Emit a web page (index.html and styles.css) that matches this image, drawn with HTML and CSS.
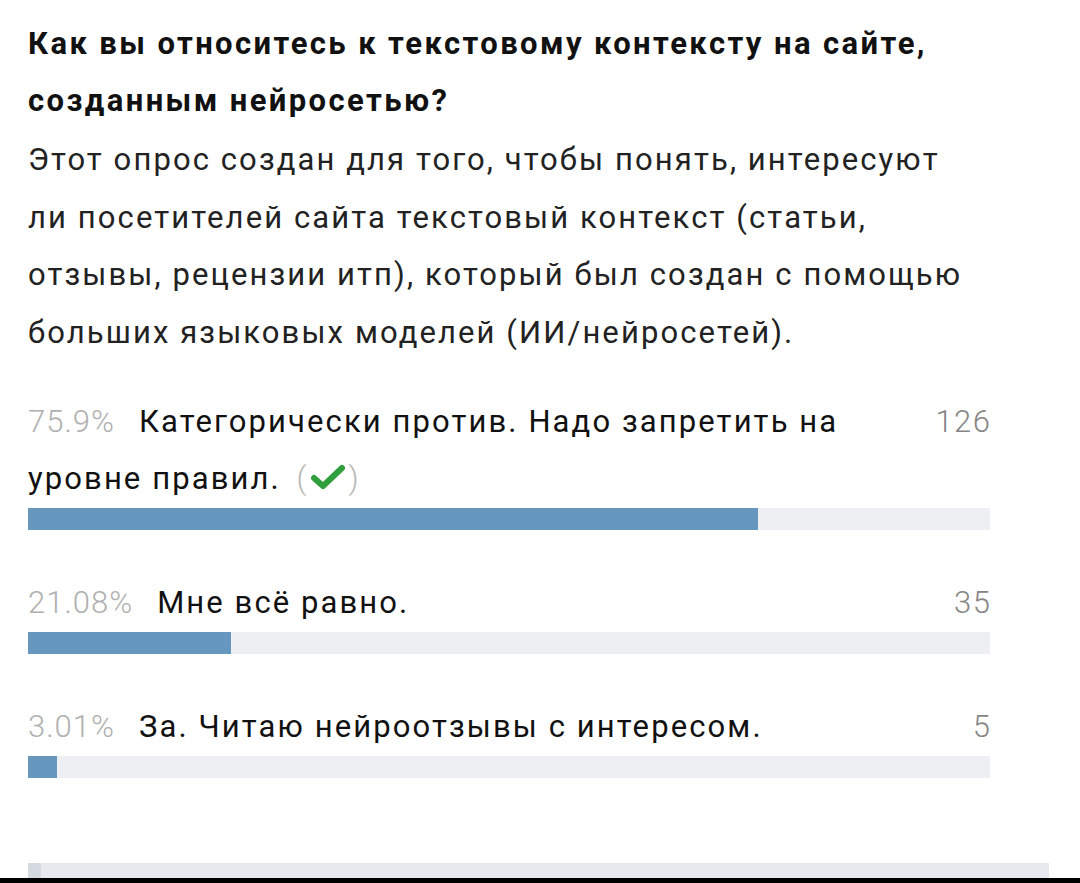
FILE: index.html
```html
<!DOCTYPE html>
<html>
<head>
  <title>Опрос</title>
  <link rel="stylesheet" href="styles.css">
</head>
<body>
  <div class="poll">
    <h1 class="poll-title">Как вы относитесь к текстовому контексту на сайте, созданным нейросетью?</h1>
    <p class="poll-desc">Этот опрос создан для того, чтобы понять, интересуют ли посетителей сайта текстовый контекст (статьи, отзывы, рецензии итп), который был создан с помощью больших языковых моделей (ИИ/нейросетей).</p>

    <div class="option">
      <div class="option-text"><span class="count">126</span><span class="percent">75.9%</span><span class="label">Категорически против. Надо запретить на</span><br><span class="label">уровне правил.</span> <span class="voted"><span class="paren">(</span><svg class="check" viewBox="0 0 36 28" width="36" height="28"><path d="M4 15 L13 23 L32 5" fill="none" stroke="#2f9e3d" stroke-width="6" stroke-linecap="round" stroke-linejoin="round"/></svg><span class="paren">)</span></span></div>
      <div class="bar"><div class="bar-fill" style="width: 75.9%"></div></div>
    </div>

    <div class="option">
      <div class="option-text"><span class="count">35</span><span class="percent">21.08%</span><span class="label">Мне всё равно.</span></div>
      <div class="bar"><div class="bar-fill" style="width: 21.08%"></div></div>
    </div>

    <div class="option">
      <div class="option-text"><span class="count">5</span><span class="percent">3.01%</span><span class="label">За. Читаю нейроотзывы с интересом.</span></div>
      <div class="bar"><div class="bar-fill" style="width: 3.01%"></div></div>
    </div>
  </div>

  <div class="next-block"><div class="next-block-edge"></div></div>
  <div class="screen-edge"></div>
</body>
</html>
```

FILE: styles.css
```css
body {
  margin: 0;
  font-family: Roboto, "Noto Sans", sans-serif;
  background-color: #ffffff;
  color: #111111;
  height: 883px;
  overflow: hidden;
}
.poll {
  padding: 15px 90px 0 28px;
}
.poll-title {
  font-size: 31px;
  font-weight: bold;
  line-height: 57px;
  letter-spacing: 2.4px;
  margin: 0;
  color: #111111;
}
.poll-desc {
  font-size: 31px;
  font-weight: normal;
  line-height: 57.5px;
  letter-spacing: 2.1px;
  margin: 2px 0 0 0;
  max-width: 948px;
  color: #222222;
}
.option {
  margin-top: 44px;
}
.option:first-of-type {
  margin-top: 32px;
}
.option-text {
  font-size: 31px;
  line-height: 57px;
  letter-spacing: 2.1px;
  color: #111111;
}
.percent {
  font-weight: 300;
  letter-spacing: 1px;
  color: #b0b0b0;
  margin-right: 24px;
}
.count {
  float: right;
  font-weight: 300;
  letter-spacing: 1.5px;
  margin-right: -1.5px;
  color: #858585;
}
.voted {
  margin-left: 6px;
}
.paren {
  font-weight: 300;
  letter-spacing: 0;
  color: #b8b8b8;
}
.check {
  vertical-align: -2px;
  margin: 0 2px 0 4px;
}
.bar {
  height: 22px;
  background-color: #edeff2;
  margin-top: 1px;
}
.bar-fill {
  height: 100%;
  background-color: #6597bf;
}
.next-block {
  margin: 85px 31px 0 28px;
  height: 15px;
  background-color: #e6e9ed;
}
.next-block-edge {
  width: 13px;
  height: 100%;
  background-color: #d5dae0;
}
.screen-edge {
  height: 6px;
  background-color: #000000;
}
```
